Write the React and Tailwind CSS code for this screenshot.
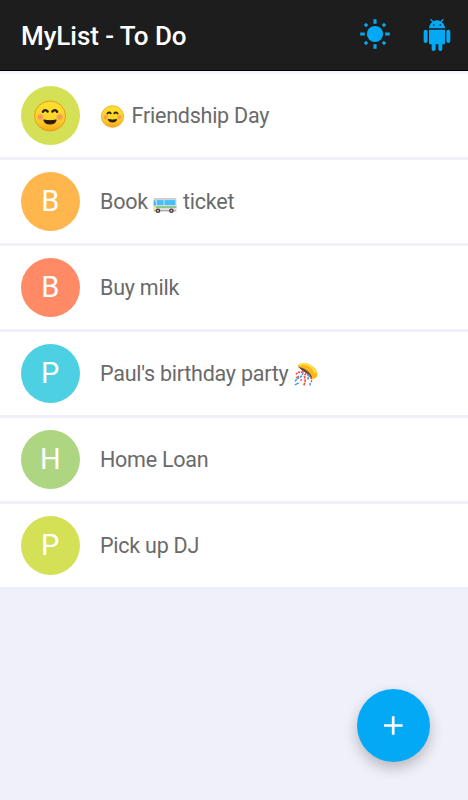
import React from 'react';

const items = [
  { id: 1, color: 'bg-[#d4e157]', avatar: 'smile', before: '', emoji: 'smile', after: 'Friendship Day' },
  { id: 2, color: 'bg-[#ffb74d]', avatar: 'B', before: 'Book', emoji: 'bus', after: 'ticket' },
  { id: 3, color: 'bg-[#ff8a65]', avatar: 'B', before: 'Buy milk' },
  { id: 4, color: 'bg-[#4dd0e1]', avatar: 'P', before: "Paul's birthday party", emoji: 'party' },
  { id: 5, color: 'bg-[#aed581]', avatar: 'H', before: 'Home Loan' },
  { id: 6, color: 'bg-[#d4e157]', avatar: 'P', before: 'Pick up DJ' },
];

function Smile({ className }) {
  return (
    <svg viewBox="0 0 32 32" className={className}>
      <defs>
        <linearGradient id="face" x1="0" y1="0" x2="0" y2="1">
          <stop offset="0" stopColor="#fde030" />
          <stop offset="0.6" stopColor="#fcd52b" />
          <stop offset="1" stopColor="#f7a71b" />
        </linearGradient>
        <radialGradient id="cheek">
          <stop offset="0" stopColor="#f5826a" stopOpacity="0.85" />
          <stop offset="0.5" stopColor="#f58a60" stopOpacity="0.7" />
          <stop offset="1" stopColor="#f5a050" stopOpacity="0" />
        </radialGradient>
      </defs>
      <ellipse cx="16" cy="16" rx="15.5" ry="15" fill="url(#face)" stroke="#eb9a14" strokeWidth="1" />
      <circle cx="6.3" cy="17" r="4.2" fill="url(#cheek)" />
      <circle cx="25.7" cy="17" r="4.2" fill="url(#cheek)" />
      <path d="M8.9 11.8Q11.2 8.6 13.6 11.6M18.4 11.6Q20.8 8.6 23.1 11.8" fill="none" stroke="#2c1c08" strokeWidth="2.4" strokeLinecap="round" />
      <path d="M9.9 20Q16 21.6 22.1 20Q21 23.8 16 23.8Q11 23.8 9.9 20Z" fill="#2c1c08" stroke="#2c1c08" strokeWidth="1.2" strokeLinejoin="round" />
    </svg>
  );
}

function Bus({ className }) {
  return (
    <svg viewBox="0 0 24 24" className={className}>
      <rect x="0.4" y="5.6" width="23.2" height="12.6" rx="1.4" fill="#dedede" />
      <rect x="0.8" y="5.2" width="22.2" height="1.4" rx="0.6" fill="#c3c3c3" />
      <path d="M0.8 7.2H2.4L3 12.4H0.6Z" fill="#42b4f5" />
      <rect x="3.8" y="7.1" width="6.8" height="5" fill="#40c0ff" />
      <rect x="11.6" y="7.1" width="10.8" height="5" fill="#40c0ff" />
      <rect x="2.8" y="13.4" width="20.6" height="1.3" fill="#64b969" />
      <rect x="0.4" y="14.2" width="1.8" height="2" fill="#fce94f" />
      <rect x="0.6" y="17" width="22.6" height="1.4" fill="#b0aeae" />
      <circle cx="5" cy="17.7" r="2.3" fill="#4e3535" />
      <circle cx="18.4" cy="17.7" r="2.3" fill="#4e3535" />
      <circle cx="5" cy="17.7" r="1" fill="#c9c0c0" />
      <circle cx="18.4" cy="17.7" r="1" fill="#c9c0c0" />
    </svg>
  );
}

function Party({ className }) {
  return (
    <svg viewBox="0 0 24 24" className={className}>
      <path d="M3.4 4.6C4 1.6 8.6 0 13.4 1.4C19.4 3.4 23.4 8 23.4 12.4C23.4 15.4 20.6 17.4 18 16.4C17 11 10 5.6 3.4 4.6Z" fill="#f9b916" />
      <path d="M5 3.4C8 1.6 12 2 15 3.4C18.4 5.2 20.8 8 21.4 11" fill="none" stroke="#ffe04f" strokeWidth="2" />
      <path d="M4 4.8C10 5.4 17.8 11 18.2 16.2C15.6 15.2 14.4 12 11.4 10.6C9 9.6 7.4 7.8 4 4.8Z" fill="#6b4332" />
      <path d="M10 9.2Q7 10.6 5.4 10.2T2 12.4M12.4 11Q9.6 13.6 10.8 16T9.8 23.4" fill="none" stroke="#f2563f" strokeWidth="1.7" strokeDasharray="2.8 0.7" />
      <path d="M15.8 12.6Q15 14.4 16.8 16T17 20.4" fill="none" stroke="#f2563f" strokeWidth="1.3" strokeDasharray="2.4 0.6" />
      <path d="M9 10.6Q8 14.6 5.6 15.4T1 19.4M13.6 12Q15 14.8 13.8 17.6" fill="none" stroke="#3d96ef" strokeWidth="1.6" strokeDasharray="2.4 0.8" />
      <path d="M0.8 23L4.6 20.8M16 21V23.6" stroke="#3d96ef" strokeWidth="1.4" />
      <path d="M2 15.8L4.8 14M6.4 18.6L8 17.4" stroke="#f2563f" strokeWidth="1.4" />
    </svg>
  );
}

const emojis = {
  smile: { Icon: Smile, className: 'mr-[2px] ml-px size-[23px]' },
  bus: { Icon: Bus, className: 'mt-[6px] size-6' },
  party: { Icon: Party, className: 'size-6' },
};

function SunIcon() {
  return (
    <svg viewBox="0 0 32 32" className="size-8 text-[#03a9f4]">
      <circle cx="16" cy="16" r="8.1" fill="currentColor" />
      <path d="M16 1.2V5.8M16 26.2V30.8M1.2 16H5.8M26.2 16H30.8M5.9 5.9L8.2 8.2M23.8 23.8L26.1 26.1M5.9 26.1L8.2 23.8M23.8 8.2L26.1 5.9" stroke="currentColor" strokeWidth="3.1" />
    </svg>
  );
}

function AndroidIcon() {
  return (
    <svg viewBox="0 0 24 24" fill="#03a9f4" className="mt-px size-8">
      <path d="M6 18c0 .55.45 1 1 1h1v3.5c0 .83.67 1.5 1.5 1.5s1.5-.67 1.5-1.5V19h2v3.5c0 .83.67 1.5 1.5 1.5s1.5-.67 1.5-1.5V19h1c.55 0 1-.45 1-1V8H6v10zM3.5 8C2.67 8 2 8.67 2 9.5v7c0 .83.67 1.5 1.5 1.5S5 17.33 5 16.5v-7C5 8.67 4.33 8 3.5 8zm17 0c-.83 0-1.5.67-1.5 1.5v7c0 .83.67 1.5 1.5 1.5s1.5-.67 1.5-1.5v-7c0-.83-.67-1.5-1.5-1.5zm-4.97-5.84l1.3-1.3c.2-.2.2-.51 0-.71-.2-.2-.51-.2-.71 0l-1.48 1.48C13.85 1.23 12.95 1 12 1c-.96 0-1.86.23-2.66.63L7.85.15c-.2-.2-.51-.2-.71 0-.2.2-.2.51 0 .71l1.31 1.31C6.97 3.26 6 5.01 6 7h12c0-1.99-.97-3.75-2.47-4.84zM10 5H9V4h1v1zm5 0h-1V4h1v1z" />
    </svg>
  );
}

function ListItem({ item }) {
  const emoji = item.emoji ? emojis[item.emoji] : null;
  return (
    <li className="flex h-[83px] items-center gap-[20.5px] bg-white pl-[21px]">
      <div className={`flex size-[58.5px] shrink-0 items-center justify-center rounded-full text-[29px] leading-none text-white ${item.color}`}>
        {item.avatar === 'smile' ? <Smile className="size-8" /> : item.avatar}
      </div>
      <div className="flex items-center gap-[5.6px] pt-px text-[21.5px] leading-none tracking-[-0.24px] text-[#6a6a6a]">
        {item.before && <span>{item.before}</span>}
        {emoji && <emoji.Icon className={emoji.className} />}
        {item.after && <span>{item.after}</span>}
      </div>
    </li>
  );
}

export default function App() {
  return (
    <div className="relative flex h-[800px] w-[468px] flex-col overflow-hidden bg-[#f0f0fa] font-['Roboto',sans-serif]">
      <header className="flex h-[71px] shrink-0 items-center justify-between border-b border-black bg-[#1d1d1d] pl-[21px] pr-[15px]">
        <h1 className="pt-[1.5px] text-[26px] leading-none font-medium tracking-[-0.06px] text-white">MyList - To Do</h1>
        <div className="flex items-center gap-[30px] pb-[2px]">
          <button aria-label="Theme"><SunIcon /></button>
          <button aria-label="Android"><AndroidIcon /></button>
        </div>
      </header>

      <ul className="flex flex-col gap-[3px] border-t-[3px] border-[#f8f4fd]">
        {items.map((item) => <ListItem key={item.id} item={item} />)}
      </ul>

      <button aria-label="Add" className="absolute right-[38px] bottom-[38.5px] flex size-[73px] items-center justify-center rounded-full bg-[#03a9f4] shadow-[0_6px_14px_rgba(0,0,0,0.24)]">
        <svg viewBox="0 0 19 19" className="size-[19px]">
          <path d="M9.2 0.2V18.8M0 9.5H18.6" stroke="#fff" strokeWidth="2.7" />
        </svg>
      </button>
    </div>
  );
}
